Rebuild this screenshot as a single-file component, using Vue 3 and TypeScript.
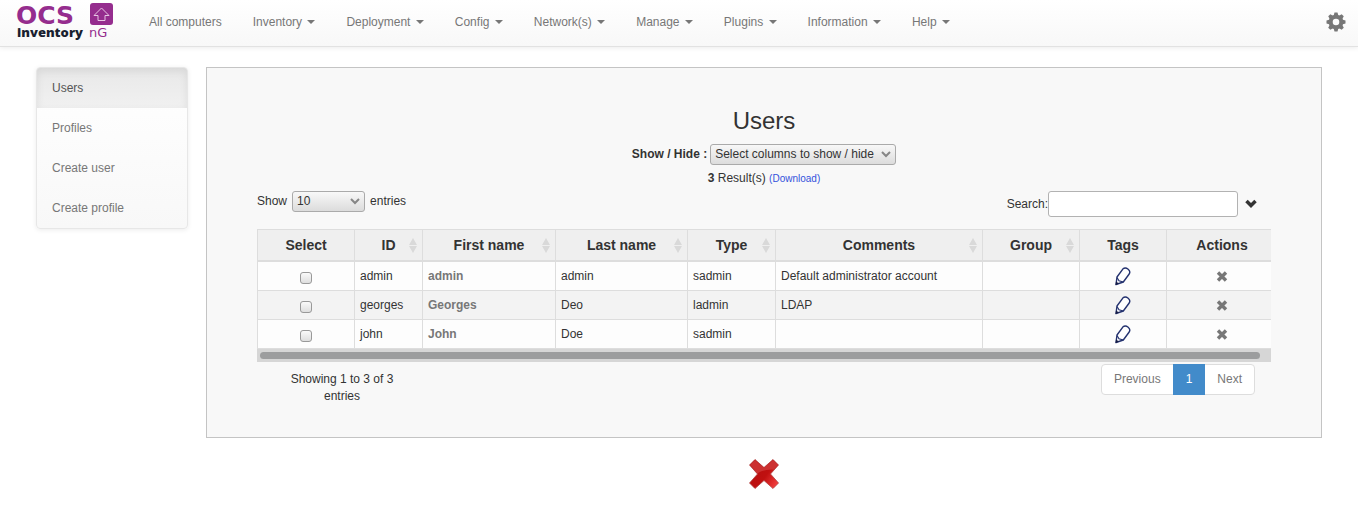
<script setup lang="ts">
import { ref } from 'vue'

interface NavItem {
  label: string
  menu: boolean
}

interface Column {
  label: string
  width: number
  sortable: boolean
}

interface UserRow {
  id: string
  firstName: string
  lastName: string
  type: string
  comments: string
  group: string
}

const navItems: NavItem[] = [
  { label: 'All computers', menu: false },
  { label: 'Inventory', menu: true },
  { label: 'Deployment', menu: true },
  { label: 'Config', menu: true },
  { label: 'Network(s)', menu: true },
  { label: 'Manage', menu: true },
  { label: 'Plugins', menu: true },
  { label: 'Information', menu: true },
  { label: 'Help', menu: true },
]

const sideItems: string[] = ['Users', 'Profiles', 'Create user', 'Create profile']
const activeSide = ref('Users')

const columns: Column[] = [
  { label: 'Select', width: 97, sortable: false },
  { label: 'ID', width: 68, sortable: true },
  { label: 'First name', width: 133, sortable: true },
  { label: 'Last name', width: 132, sortable: true },
  { label: 'Type', width: 88, sortable: true },
  { label: 'Comments', width: 207, sortable: true },
  { label: 'Group', width: 97, sortable: true },
  { label: 'Tags', width: 87, sortable: false },
  { label: 'Actions', width: 111, sortable: false },
]

const users: UserRow[] = [
  { id: 'admin', firstName: 'admin', lastName: 'admin', type: 'sadmin', comments: 'Default administrator account', group: '' },
  { id: 'georges', firstName: 'Georges', lastName: 'Deo', type: 'ladmin', comments: 'LDAP', group: '' },
  { id: 'john', firstName: 'John', lastName: 'Doe', type: 'sadmin', comments: '', group: '' },
]

const selected = ref<string[]>([])
const search = ref('')
const pageSize = ref('10')
const gearAngles: number[] = [0, 45, 90, 135, 180, 225, 270, 315]
</script>

<template>
  <div class="page">
    <header class="navbar">
      <a class="brand" href="#" aria-label="OCS inventory NG">
        <svg width="102" height="44" viewBox="0 0 102 44">
          <text class="logo-ocs" x="3" y="24">OCS</text>
          <text class="logo-inventory" x="4" y="37">inventory</text>
          <text class="logo-ng" x="76" y="37">nG</text>
          <rect x="77" y="3" width="23" height="22" rx="3" fill="#952d8e" />
          <path d="M88.500 8 L96 15.500 H92 V20.500 H85 V15.500 H81 Z" fill="none" stroke="#e6c5e3" stroke-width="1" />
        </svg>
      </a>
      <nav class="nav-links">
        <a v-for="item in navItems" :key="item.label" href="#">
          {{ item.label }}
          <span v-if="item.menu" class="caret"></span>
        </a>
      </nav>
      <button class="gear" type="button" aria-label="Settings">
        <svg width="20" height="20" viewBox="-10 -10 20 20">
          <circle r="5.300" fill="none" stroke="#777" stroke-width="4" />
          <path
            v-for="angle in gearAngles"
            :key="angle"
            d="M-2.500 -6 L-1.500 -9.500 H1.500 L2.500 -6 Z"
            fill="#777"
            :transform="`rotate(${angle})`"
          />
        </svg>
      </button>
    </header>

    <div class="content">
      <aside class="sidebar">
        <a
          v-for="item in sideItems"
          :key="item"
          href="#"
          :class="{ active: item === activeSide }"
          @click.prevent="activeSide = item"
        >{{ item }}</a>
      </aside>

      <main class="main">
        <section class="panel">
          <h1>Users</h1>

          <div class="columns-row">
            <label for="columns">Show / Hide :</label>
            <span class="select-box">
              <select id="columns" class="select-columns">
                <option>Select columns to show / hide</option>
              </select>
              <svg width="10" height="7" viewBox="0 0 10 7">
                <path d="M1 1 L5 5 L9 1" fill="none" stroke="#868686" stroke-width="2" />
              </svg>
            </span>
          </div>

          <p class="results"><strong>3</strong> Result(s) <a href="#">(Download)</a></p>

          <div class="controls">
            <div class="length">
              <label for="length">Show</label>
              <span class="select-box">
                <select id="length" v-model="pageSize" class="select-length">
                  <option>10</option>
                  <option>25</option>
                  <option>50</option>
                </select>
                <svg width="10" height="7" viewBox="0 0 10 7">
                  <path d="M1 1 L5 5 L9 1" fill="none" stroke="#868686" stroke-width="2" />
                </svg>
              </span>
              <span>entries</span>
            </div>
            <div class="filter">
              <label for="search">Search:</label>
              <input id="search" v-model="search" type="text" />
              <button type="button" aria-label="More filters">
                <svg width="12" height="10" viewBox="0 0 12 10">
                  <path d="M1.500 2 L6 6.500 L10.500 2" fill="none" stroke="#333" stroke-width="3.500" />
                </svg>
              </button>
            </div>
          </div>

          <div class="table-clip">
            <table>
              <colgroup>
                <col v-for="col in columns" :key="col.label" :style="{ width: col.width + 'px' }" />
              </colgroup>
              <thead>
                <tr>
                  <th v-for="col in columns" :key="col.label" scope="col">
                    <span class="head-cell">
                      <span class="head-label">{{ col.label }}</span>
                      <svg v-if="col.sortable" class="sort" width="8" height="15" viewBox="0 0 8 15">
                        <path d="M4 0 L8 7 H0 Z M0 8 H8 L4 15 Z" fill="#d9d9d9" />
                      </svg>
                    </span>
                  </th>
                </tr>
              </thead>
              <tbody>
                <tr v-for="user in users" :key="user.id">
                  <td class="center">
                    <input v-model="selected" type="checkbox" :value="user.id" :aria-label="'Select ' + user.id" />
                  </td>
                  <td>{{ user.id }}</td>
                  <td><a class="name" href="#">{{ user.firstName }}</a></td>
                  <td>{{ user.lastName }}</td>
                  <td>{{ user.type }}</td>
                  <td>{{ user.comments }}</td>
                  <td>{{ user.group }}</td>
                  <td class="center">
                    <button class="icon" type="button" :aria-label="'Edit tags of ' + user.id">
                      <svg width="16" height="19" viewBox="0 0 16 19">
                        <path d="M1 17.500 L2 10 L8 1.800 Q10.300 0 13.200 2.200 Q15.800 4.400 14.200 7 L8.300 15 Z" fill="#fff" stroke="#24326f" stroke-width="1.400" stroke-linejoin="round" />
                        <path d="M2 10.500 L4 13.700 L8.300 15" fill="none" stroke="#24326f" stroke-width="1.200" />
                        <path d="M0.500 18.200 L1 14.500 L4 16.500 Z" fill="#171d45" />
                      </svg>
                    </button>
                  </td>
                  <td class="center">
                    <button class="icon" type="button" :aria-label="'Delete ' + user.id">
                      <svg width="12" height="11" viewBox="0 0 12 11">
                        <path d="M2 1.500 L10 9.500 M10 1.500 L2 9.500" stroke="#777" stroke-width="3.400" />
                      </svg>
                    </button>
                  </td>
                </tr>
              </tbody>
            </table>
          </div>
          <div class="scroll-track"><div class="scroll-thumb"></div></div>

          <div class="footer">
            <p class="info">Showing 1 to 3 of 3 entries</p>
            <nav class="pagination" aria-label="Pages">
              <a href="#">Previous</a>
              <a href="#" class="current">1</a>
              <a href="#">Next</a>
            </nav>
          </div>
        </section>

        <button class="delete" type="button" aria-label="Delete selected users">
          <svg width="30" height="30" viewBox="0 0 30 30">
            <defs>
              <linearGradient id="cross-base" x1="0" y1="0.300" x2="1" y2="1">
                <stop offset="0" stop-color="#b50f0f" />
                <stop offset="0.500" stop-color="#c01010" />
                <stop offset="1" stop-color="#ff4a4a" />
              </linearGradient>
              <clipPath id="cross-top"><path d="M0 0 H30 V11 Q17 9 9 14 H0 Z" /></clipPath>
            </defs>
            <path d="M6 0.500 L15 8.500 L24 0.500 L29.500 6 L21.500 15 L29.500 24 L24 29.500 L15 21.500 L6 29.500 L0.500 24 L8.500 15 L0.500 6 Z" fill="url(#cross-base)" stroke="#b04040" stroke-width="0.800" stroke-linejoin="round" />
            <path d="M6 1 L15 9 L24 1 L29 6 L21 15 H9 L1 6 Z" fill="#cc3131" clip-path="url(#cross-top)" />
          </svg>
        </button>
      </main>
    </div>
  </div>
</template>

<style>
body {
  margin: 0;
  background: #fff;
}
</style>

<style scoped>
.page {
  color: #333;
  font: 12px/17px "Liberation Sans", Arial, sans-serif;
}
.page * {
  box-sizing: border-box;
}
a {
  text-decoration: none;
}
svg {
  display: block;
}
button {
  padding: 0;
  border: 0;
  background: none;
  cursor: pointer;
}
.navbar {
  display: flex;
  align-items: center;
  height: 47px;
  padding: 0 12px 2px 13px;
  border-bottom: 1px solid #e2e2e2;
  background: linear-gradient(#fff, #f8f8f8);
  box-shadow: 0 1px 5px rgba(0, 0, 0, 0.08);
}
.logo-ocs {
  fill: #952d8e;
  font: bold 25px "DejaVu Sans", sans-serif;
}
.logo-inventory {
  fill: #191f30;
  font: 800 13px "Open Sans", sans-serif;
}
.logo-ng {
  fill: #952d8e;
  font: 13px "DejaVu Sans", sans-serif;
}
.nav-links {
  display: flex;
  flex: 1;
  gap: 1px;
  margin-left: 19px;
}
.nav-links a {
  padding: 0 15px;
  color: #777;
  white-space: nowrap;
}
.caret {
  display: inline-block;
  margin-left: 2px;
  border-top: 4px solid #777;
  border-right: 4px solid transparent;
  border-left: 4px solid transparent;
  vertical-align: middle;
}
.content {
  display: flex;
  align-items: flex-start;
  gap: 18px;
  padding: 20px 36px 0;
}
.sidebar {
  flex: 0 0 152px;
  overflow: hidden;
  border: 1px solid #e7e7e7;
  border-radius: 4px;
  background: linear-gradient(#fff, #f8f8f8);
  box-shadow: 0 1px 5px rgba(0, 0, 0, 0.08);
}
.sidebar a {
  display: block;
  padding: 0 15px;
  color: #777;
  line-height: 40px;
}
.sidebar a.active {
  background: linear-gradient(#e8e8e8, #f1f1f1);
  box-shadow: inset 0 3px 9px rgba(0, 0, 0, 0.08);
  color: #555;
}
.main {
  display: flex;
  flex: 1;
  flex-direction: column;
  min-width: 0;
}
.panel {
  padding: 40px 50px 32px;
  border: 1px solid #c4c4c4;
  background: #f8f8f8;
}
h1 {
  margin: 0 0 10px;
  font-size: 24px;
  font-weight: 400;
  line-height: 26px;
  text-align: center;
}
.columns-row {
  display: flex;
  align-items: center;
  justify-content: center;
  gap: 3px;
}
.columns-row label {
  font-weight: 700;
}
.select-box {
  display: inline-grid;
  align-items: center;
}
.select-box select,
.select-box svg {
  grid-area: 1 / 1;
}
.select-box svg {
  justify-self: end;
  margin-right: 5px;
  pointer-events: none;
}
select {
  height: 21px;
  margin: 0;
  padding: 0 4px;
  border: 1px solid #aaa;
  border-radius: 3px;
  appearance: none;
  background: linear-gradient(#f8f8f8, #dcdcdc);
  color: #333;
  font: inherit;
}
.select-columns {
  width: 186px;
}
.select-length {
  width: 73px;
}
.results {
  margin: 5px 0 4px;
  text-align: center;
}
.results a {
  color: #3352dc;
  font-size: 10px;
}
.controls {
  display: flex;
  align-items: flex-start;
  justify-content: space-between;
  margin-bottom: 12px;
}
.length {
  display: flex;
  align-items: center;
  gap: 5px;
}
.filter {
  display: flex;
  align-items: center;
  padding-right: 14px;
}
.filter input {
  width: 190px;
  height: 26px;
  padding: 0 5px;
  border: 1px solid #b2b2b2;
  border-radius: 3px;
  background: #fff;
  font: inherit;
}
.filter button {
  margin-left: 7px;
}
.table-clip {
  overflow: hidden;
}
table {
  width: calc(100% + 6px);
  border-spacing: 0;
  border-top: 1px solid #ddd;
  table-layout: fixed;
}
th {
  height: 32px;
  padding: 0;
  border-bottom: 2px solid #ddd;
  border-left: 1px solid #ddd;
  background: #efefef;
  font-size: 14px;
}
.head-cell {
  display: grid;
  align-items: center;
}
.head-label,
.sort {
  grid-area: 1 / 1;
}
.sort {
  justify-self: end;
  margin-right: 5px;
}
td {
  height: 29px;
  padding: 0 5px;
  border-bottom: 1px solid #ddd;
  border-left: 1px solid #ddd;
  background: #fdfdfd;
}
tbody tr:nth-child(even) td {
  background: #f3f3f3;
}
.center {
  text-align: center;
}
.name {
  color: #777;
  font-weight: 700;
}
td input {
  display: block;
  width: 12px;
  height: 12px;
  margin: 4px auto 0;
  border: 1px solid #999;
  border-radius: 3px;
  appearance: none;
  background: linear-gradient(#fafafa, #dedede);
}
td input:checked {
  background: #428bca;
}
.icon {
  display: block;
  margin: 0 auto;
}
.scroll-track {
  padding: 3px 11px 3px 3px;
  background: #d6d6d6;
}
.scroll-thumb {
  height: 7px;
  border-radius: 4px;
  background: #9c9d9e;
}
.footer {
  display: flex;
  align-items: flex-start;
  justify-content: space-between;
  padding: 2px 16px 0 15px;
}
.info {
  width: 140px;
  margin: 7px 0 0;
  text-align: center;
}
.pagination {
  display: flex;
  border: 1px solid #ddd;
  border-radius: 4px;
  background: #fff;
}
.pagination a {
  padding: 6px 12px;
  color: #777;
}
.pagination .current {
  margin: -1px 0;
  padding: 7px 13px;
  background: #428bca;
  color: #fff;
}
.delete {
  align-self: center;
  margin: 21px 0 0;
}
</style>
